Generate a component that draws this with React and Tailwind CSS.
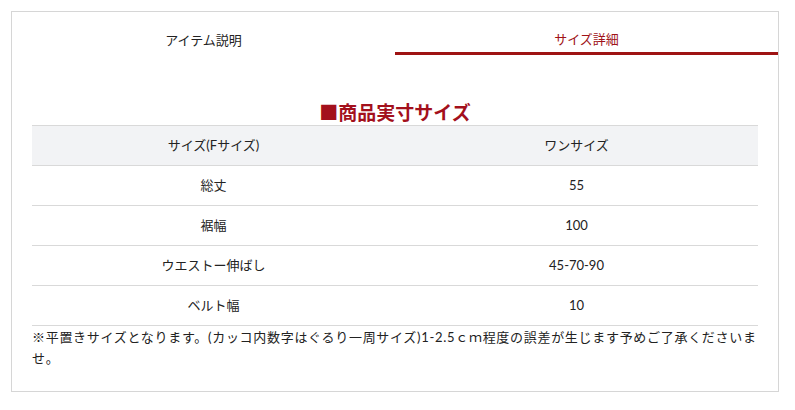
import React, { useState } from 'react';

const rows = [
  ['総丈', '55'],
  ['裾幅', '100'],
  ['ウエストー伸ばし', '45-70-90'],
  ['ベルト幅', '10'],
];

const tabs = ['アイテム説明', 'サイズ詳細'];

const App = () => {
  const [active, setActive] = useState(1);

  return (
    <div className="min-h-screen bg-white pl-[11px] pt-[11px] font-['Lato','Noto_Sans_CJK_JP',sans-serif] text-[13px] text-[#222]">
      <div className="w-[768px] h-[381px] border border-[#d6d6d6]">
        {/* tabs */}
        <div className="grid grid-cols-2">
          {tabs.map((t, i) => (
            <button
              key={t}
              onClick={() => setActive(i)}
              className={`h-[43px] pt-[13px] leading-[16px] text-center align-top ${
                active === i ? 'border-b-[3px] border-[#9e1313] text-[#a01218]' : 'text-[#222]'
              }`}
            >
              {t}
            </button>
          ))}
        </div>

        <div className="px-[20px]">
          <h2 className="mt-[45px] h-[25px] text-center text-[19px] leading-[25px] font-bold text-[#a3101c]">
            ■商品実寸サイズ
          </h2>

          <div className="border-t border-[#d9d9d9]">
            <div className="grid grid-cols-2 h-[40px] items-center bg-[#f2f3f5] border-b border-[#d9d9d9] text-center">
              <div>サイズ(Fサイズ)</div>
              <div>ワンサイズ</div>
            </div>
            {rows.map(([k, v]) => (
              <div key={k} className="grid grid-cols-2 h-[40px] items-center border-b border-[#d9d9d9] text-center">
                <div>{k}</div>
                <div>{v}</div>
              </div>
            ))}
          </div>

          <p className="leading-[21px] pt-[1px] tracking-[0.7px]">
            ※平置きサイズとなります。(カッコ内数字はぐるり一周サイズ)1-2.5ｃｍ程度の誤差が生じます予めご了承くださいませ。
          </p>
        </div>
      </div>
    </div>
  );
};

export default App;
